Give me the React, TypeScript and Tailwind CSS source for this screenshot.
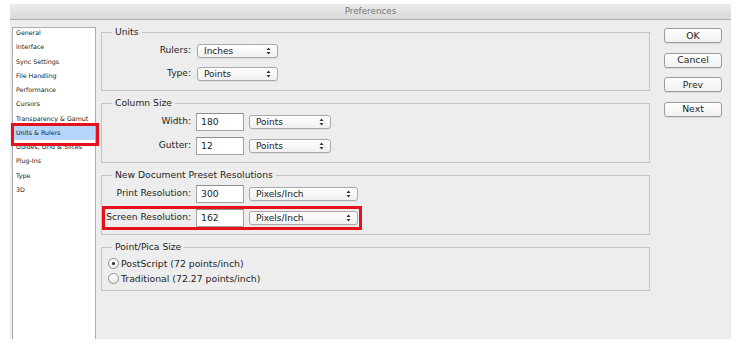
import React from "react";

const FONT = { fontFamily: '"DejaVu Sans", "Liberation Sans", sans-serif' };

function Arrows() {
  return (
    <svg width="5" height="8" viewBox="0 0 5 8" className="shrink-0">
      <path d="M2.5 0.5 L4.5 3 L0.5 3 Z" fill="#333" />
      <path d="M2.5 7.5 L4.5 5 L0.5 5 Z" fill="#333" />
    </svg>
  );
}

function Select({ value, w }: { value: string; w: string }) {
  return (
    <div
      className={`${w} h-[14px] flex items-center justify-between pl-[6px] pr-[6px] rounded-[3px] border border-[#a9a9a9] bg-gradient-to-b from-white to-[#f0f0f0] text-[9px] leading-none text-[#1e1e1e] shadow-[0_1px_0_rgba(0,0,0,0.06)]`}
    >
      <span>{value}</span>
      <Arrows />
    </div>
  );
}

function Input({ value }: { value: string }) {
  return (
    <div className="w-[48px] h-[18px] flex items-center pl-[4px] bg-white border border-[#a4a4a4] border-t-[#8e8e8e] text-[9.3px] leading-none text-[#1e1e1e]">
      {value}
    </div>
  );
}

function Label({ children }: { children: React.ReactNode }) {
  return (
    <div className="w-[89px] text-right text-[9.1px] leading-none text-[#222] whitespace-nowrap">
      {children}
    </div>
  );
}

function Group({
  title,
  className,
  children,
}: {
  title: string;
  className: string;
  children: React.ReactNode;
}) {
  return (
    <fieldset className={`border border-[#c4c4c4] ${className}`}>
      <legend className="ml-[10px] px-[3px] text-[9.2px] leading-[12px] text-[#1e1e1e]">
        {title}
      </legend>
      {children}
    </fieldset>
  );
}

function Radio({ checked, label }: { checked?: boolean; label: string }) {
  return (
    <div className="h-[15px] flex items-center gap-[2px] pl-[6px]">
      <div className="w-[11px] h-[11px] rounded-full border border-[#8d8d8d] bg-gradient-to-b from-white to-[#ececec] flex items-center justify-center">
        {checked && <div className="w-[3px] h-[3px] rounded-full bg-[#222]" />}
      </div>
      <span className="text-[9.3px] leading-none text-[#1e1e1e]">{label}</span>
    </div>
  );
}

function Btn({ label }: { label: string }) {
  return (
    <div className="h-[15px] w-[58px] flex items-center justify-center rounded-[3px] border border-[#9c9c9c] bg-gradient-to-b from-white to-[#f0f0f0] text-[9.3px] leading-none text-[#1e1e1e] shadow-[0_1px_0_rgba(0,0,0,0.08)]">
      {label}
    </div>
  );
}

const items = [
  "General",
  "Interface",
  "Sync Settings",
  "File Handling",
  "Performance",
  "Cursors",
  "Transparency & Gamut",
  "Units & Rulers",
  "Guides, Grid & Slices",
  "Plug-Ins",
  "Type",
  "3D",
];

export default function App() {
  return (
    <div className="w-[738px] h-[349px] bg-white overflow-hidden" style={FONT}>
      <div className="ml-[10px] pt-[4px] w-[721px]">
        <div className="h-[335px] bg-[#ededed] flex flex-col">
          {/* title bar */}
          <div className="h-[16px] shrink-0 flex items-center justify-center bg-gradient-to-b from-[#ebebeb] to-[#d9d9d9] border-b border-[#b1b1b1] text-[8.8px] leading-none text-[#777]">
            Preferences
          </div>
          <div className="flex flex-1 min-h-0">
            {/* sidebar */}
            <div className="ml-[2px] mt-[7px] w-[84px] bg-white border border-b-0 border-[#adadad] relative">
              <div className="-mt-[2px] flex flex-col">
                {items.map((it) => {
                  const sel = it === "Units & Rulers";
                  return (
                    <div
                      key={it}
                      className={`h-[14.27px] flex items-center pl-[3px] text-[6.3px] leading-none whitespace-nowrap text-[#1a1a1a] ${
                        sel ? "bg-[#b7d6fb]" : ""
                      }`}
                    >
                      {it}
                    </div>
                  );
                })}
              </div>
              <div className="absolute left-[-2px] top-[95px] w-[88px] h-[23px] border-[3px] border-[#e5121b]" />
            </div>

            {/* content */}
            <div className="ml-[5px] mt-[6px] w-[549px] flex flex-col gap-[6px]">
              <Group title="Units" className="pt-[6px] pb-[9px]">
                <div className="flex flex-col gap-[9px]">
                  <div className="flex items-center gap-[6px]">
                    <Label>Rulers:</Label>
                    <Select value="Inches" w="w-[81px]" />
                  </div>
                  <div className="flex items-center gap-[6px]">
                    <Label>Type:</Label>
                    <Select value="Points" w="w-[81px]" />
                  </div>
                </div>
              </Group>

              <Group title="Column Size" className="pt-[4px] pb-[7px]">
                <div className="flex flex-col gap-[6px]">
                  <div className="flex items-center gap-[5px]">
                    <Label>Width:</Label>
                    <Input value="180" />
                    <Select value="Points" w="w-[82px]" />
                  </div>
                  <div className="flex items-center gap-[5px]">
                    <Label>Gutter:</Label>
                    <Input value="12" />
                    <Select value="Points" w="w-[82px]" />
                  </div>
                </div>
              </Group>

              <Group title="New Document Preset Resolutions" className="pt-[4px] pb-[7px]">
                <div className="flex flex-col gap-[6px]">
                  <div className="flex items-center gap-[5px]">
                    <Label>Print Resolution:</Label>
                    <Input value="300" />
                    <Select value="Pixels/Inch" w="w-[109px]" />
                  </div>
                  <div className="flex items-center gap-[5px] relative">
                    <Label>Screen Resolution:</Label>
                    <Input value="162" />
                    <Select value="Pixels/Inch" w="w-[109px]" />
                    <div className="absolute left-0 top-[-3px] w-[260px] h-[24px] border-[3px] border-[#e5121b]" />
                  </div>
                </div>
              </Group>

              <Group title="Point/Pica Size" className="pt-[3px] pb-[4px]">
                <Radio checked label="PostScript (72 points/inch)" />
                <Radio label="Traditional (72.27 points/inch)" />
              </Group>
            </div>

            {/* buttons */}
            <div className="ml-[14px] mt-[8px] flex flex-col gap-[9.5px]">
              <Btn label="OK" />
              <Btn label="Cancel" />
              <Btn label="Prev" />
              <Btn label="Next" />
            </div>
          </div>
        </div>
      </div>
    </div>
  );
}
